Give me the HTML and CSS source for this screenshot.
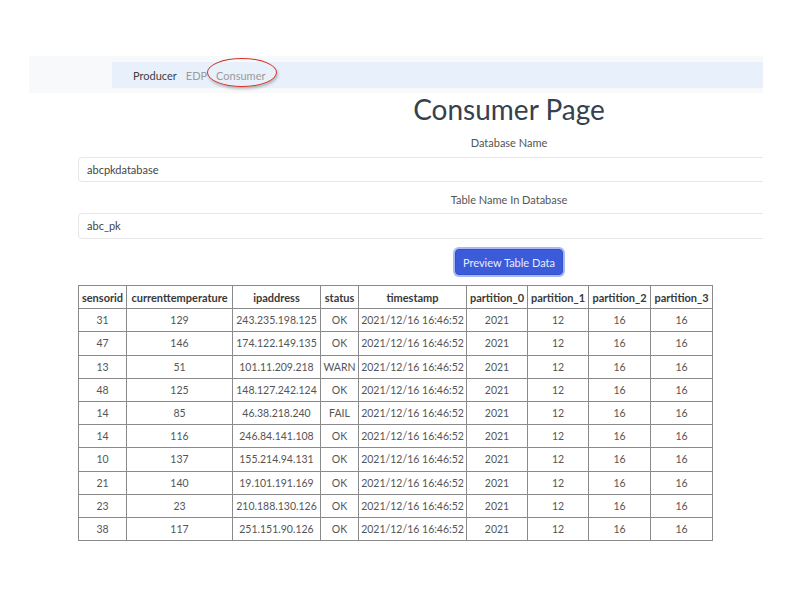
FILE: index.html
```html
<!DOCTYPE html>
<html>
<head>
<meta charset="utf-8">
<link rel="stylesheet" href="styles.css">
</head>
<body>
<div class="page">
  <div class="navbar">
    <div class="nav-inner">
      <span class="nav-link active">Producer</span>
      <span class="nav-link">EDP</span>
      <span class="nav-link current">Consumer<span class="annot"></span></span>
    </div>
  </div>
  <div class="content">
    <h1 class="title">Consumer Page</h1>
    <div class="label">Database Name</div>
    <div class="input">abcpkdatabase</div>
    <div class="label label2">Table Name In Database</div>
    <div class="input input2">abc_pk</div>
    <div class="btn-row"><button class="btn">Preview Table Data</button></div>
    <table class="data">
      <colgroup>
        <col class="c1"><col class="c2"><col class="c3"><col class="c4"><col class="c5"><col class="c6"><col class="c7"><col class="c8"><col class="c9">
      </colgroup>
      <thead>
        <tr><th>sensorid</th><th>currenttemperature</th><th>ipaddress</th><th>status</th><th>timestamp</th><th>partition_0</th><th>partition_1</th><th>partition_2</th><th>partition_3</th></tr>
      </thead>
      <tbody>
        <tr><td>31</td><td>129</td><td>243.235.198.125</td><td>OK</td><td>2021/12/16 16:46:52</td><td>2021</td><td>12</td><td>16</td><td>16</td></tr>
        <tr><td>47</td><td>146</td><td>174.122.149.135</td><td>OK</td><td>2021/12/16 16:46:52</td><td>2021</td><td>12</td><td>16</td><td>16</td></tr>
        <tr><td>13</td><td>51</td><td>101.11.209.218</td><td>WARN</td><td>2021/12/16 16:46:52</td><td>2021</td><td>12</td><td>16</td><td>16</td></tr>
        <tr><td>48</td><td>125</td><td>148.127.242.124</td><td>OK</td><td>2021/12/16 16:46:52</td><td>2021</td><td>12</td><td>16</td><td>16</td></tr>
        <tr><td>14</td><td>85</td><td>46.38.218.240</td><td>FAIL</td><td>2021/12/16 16:46:52</td><td>2021</td><td>12</td><td>16</td><td>16</td></tr>
        <tr><td>14</td><td>116</td><td>246.84.141.108</td><td>OK</td><td>2021/12/16 16:46:52</td><td>2021</td><td>12</td><td>16</td><td>16</td></tr>
        <tr><td>10</td><td>137</td><td>155.214.94.131</td><td>OK</td><td>2021/12/16 16:46:52</td><td>2021</td><td>12</td><td>16</td><td>16</td></tr>
        <tr><td>21</td><td>140</td><td>19.101.191.169</td><td>OK</td><td>2021/12/16 16:46:52</td><td>2021</td><td>12</td><td>16</td><td>16</td></tr>
        <tr><td>23</td><td>23</td><td>210.188.130.126</td><td>OK</td><td>2021/12/16 16:46:52</td><td>2021</td><td>12</td><td>16</td><td>16</td></tr>
        <tr><td>38</td><td>117</td><td>251.151.90.126</td><td>OK</td><td>2021/12/16 16:46:52</td><td>2021</td><td>12</td><td>16</td><td>16</td></tr>
      </tbody>
    </table>
  </div>
</div>
</body>
</html>
```

FILE: styles.css
```css
html, body {
  margin: 0;
  padding: 0;
  background: #ffffff;
}
body {
  font-family: Lato, "Open Sans", sans-serif;
  color: #555;
}
.page {
  width: 763px;
  height: 612px;
  overflow: hidden;
  padding-top: 56px;
  box-sizing: border-box;
}
.navbar {
  margin-left: 29px;
  background: #f8f9fa;
  padding: 6px 0 5px 83px;
}
.nav-inner {
  background: #e8f1fb;
  height: 26px;
  display: flex;
  align-items: center;
  padding-left: 21px;
  gap: 9px;
  font-size: 11px;
}
.nav-link {
  color: #9a9a9a;
  position: relative;
}
.nav-link.active {
  color: #3f3f3f;
}
.annot {
  position: absolute;
  left: -9px;
  top: -11px;
  width: 68px;
  height: 27px;
  border: 1.5px solid #d0362a;
  border-radius: 50%;
  box-shadow: 1px 2px 3px rgba(0,0,0,0.25);
}
.content {
  margin-left: 78px;
  width: 862px;
}
.title {
  margin: 0;
  height: 32px;
  line-height: 32px;
  font-size: 28px;
  font-weight: 400;
  color: #36404e;
  text-align: center;
}
.label {
  margin-top: 10px;
  height: 16px;
  line-height: 16px;
  font-size: 11px;
  color: #555;
  text-align: center;
}
.label2 {
  margin-top: 10px;
}
.input {
  margin-top: 6px;
  height: 25px;
  line-height: 23px;
  box-sizing: border-box;
  border: 1px solid #e6e6e6;
  border-radius: 4px;
  padding-left: 8px;
  font-size: 11px;
  color: #444;
}
.input2 {
  margin-top: 5px;
  height: 26px;
  line-height: 24px;
}
.btn-row {
  margin-top: 10px;
  display: flex;
  justify-content: center;
}
.btn {
  width: 108px;
  height: 26px;
  padding: 0;
  border: 1px solid #3050cf;
  border-radius: 4px;
  background: #3b5bd9;
  color: #e8ecff;
  font-family: Lato, "Open Sans", sans-serif;
  font-size: 11px;
  box-shadow: 0 0 0 2px #a9b9f5;
}
.data {
  margin-top: 10px;
  border-collapse: collapse;
  table-layout: fixed;
  width: 634px;
  font-size: 10.5px;
}
.c1 { width: 48px; }
.c2 { width: 106px; }
.c3 { width: 88px; }
.c4 { width: 38px; }
.c5 { width: 108px; }
.c6 { width: 61px; }
.c7 { width: 61px; }
.c8 { width: 62px; }
.c9 { width: 62px; }
.data th, .data td {
  border: 1px solid #8a8a8a;
  height: 22.2px;
  padding: 0;
  text-align: center;
  white-space: nowrap;
  overflow: hidden;
}
.data th {
  font-weight: 700;
  font-size: 11px;
  color: #3a3a3a;
}
.data td {
  color: #555;
}
```
